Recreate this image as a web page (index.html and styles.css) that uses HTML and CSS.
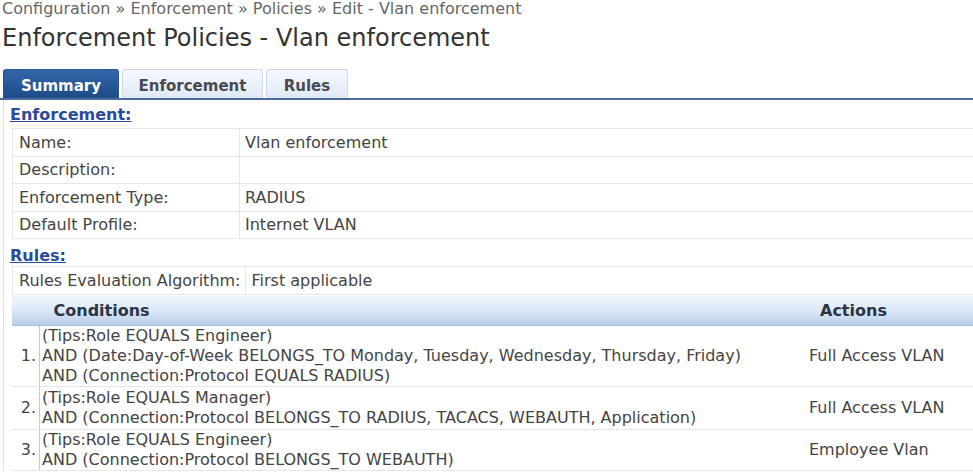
FILE: index.html
```html
<!DOCTYPE html>
<html>
<head>
<meta charset="utf-8">
<link rel="stylesheet" href="styles.css">
</head>
<body>
<div class="crumb">Configuration » Enforcement » Policies » Edit - Vlan enforcement</div>
<h1 class="title">Enforcement Policies - Vlan enforcement</h1>
<div class="tabs">
  <div class="tab active">Summary</div>
  <div class="tab tab-enf">Enforcement</div>
  <div class="tab tab-rules">Rules</div>
</div>
<div class="panel">
  <a class="section" href="#">Enforcement:</a>
  <table class="kv">
    <tr><td class="k">Name:</td><td class="v">Vlan enforcement</td></tr>
    <tr><td class="k">Description:</td><td class="v"></td></tr>
    <tr><td class="k">Enforcement Type:</td><td class="v">RADIUS</td></tr>
    <tr><td class="k">Default Profile:</td><td class="v">Internet VLAN</td></tr>
  </table>
  <a class="section rules-link" href="#">Rules:</a>
  <table class="kv algo">
    <tr><td class="k">Rules Evaluation Algorithm:</td><td class="v">First applicable</td></tr>
  </table>
  <table class="rules">
    <tr class="head"><th class="num"></th><th class="cond">Conditions</th><th class="act">Actions</th></tr>
    <tr class="r1"><td class="num">1.</td><td class="cond">(Tips:Role EQUALS Engineer)<br>AND (Date:Day-of-Week BELONGS_TO Monday, Tuesday, Wednesday, Thursday, Friday)<br>AND (Connection:Protocol EQUALS RADIUS)</td><td class="act">Full Access VLAN</td></tr>
    <tr class="r2"><td class="num">2.</td><td class="cond">(Tips:Role EQUALS Manager)<br>AND (Connection:Protocol BELONGS_TO RADIUS, TACACS, WEBAUTH, Application)</td><td class="act">Full Access VLAN</td></tr>
    <tr class="r3"><td class="num">3.</td><td class="cond">(Tips:Role EQUALS Engineer)<br>AND (Connection:Protocol BELONGS_TO WEBAUTH)</td><td class="act">Employee Vlan</td></tr>
  </table>
</div>
</body>
</html>
```
FILE: styles.css
```css
html, body { margin: 0; padding: 0; background: #fff; }
body { font-family: "DejaVu Sans", Verdana, sans-serif; color: #444; overflow: hidden; }
.crumb { font-size: 16px; color: #666; padding: 0 0 0 2px; height: 20px; line-height: 17px; white-space: nowrap; }
.title { font-size: 24px; font-weight: normal; color: #333; margin: 0; padding: 5px 0 0 2px; line-height: 26px; height: 42px; box-sizing: border-box; white-space: nowrap; }
.tabs { display: flex; gap: 3px; padding: 7px 0 0 3px; border-bottom: 2px solid #4d6a9c; height: 29px; }
.tab { font-size: 15px; font-weight: bold; color: #4a4a50; background: linear-gradient(#f4f8fd, #dfe9f6); border: 1px solid #d0d9e6; border-bottom: none; border-radius: 3px 3px 0 0; display: flex; align-items: center; justify-content: center; height: 29px; padding-top: 3px; box-sizing: border-box; }
.tab.active { width: 116px; color: #fff; background: linear-gradient(#3466a8, #1d4b8a); border-color: #2a5595; }
.tab-enf { width: 141px; }
.tab-rules { width: 82px; }
.panel { border-left: 1px solid #dde0e6; margin-left: 3px; padding: 6px 0 0 6px; }
.section { display: block; font-size: 16px; font-weight: bold; color: #2a4a9a; text-decoration: underline; line-height: 18px; height: 22px; }
.kv { border-collapse: collapse; width: calc(100% + 20px); margin-left: 2px; font-size: 16px; }
.kv td { border: 1px solid #e6e6ec; height: 26.5px; padding: 0 6px; color: #444; white-space: nowrap; }
.kv td.k { width: 214px; }
.kv td.v { padding-left: 5px; }
.rules-link { margin-top: 8px; height: 19px; }
.algo td.k { width: auto; padding-right: 4px; height: 26px; }
.algo td.v { padding-left: 6px; width: 100%; }
.rules { border-collapse: collapse; width: calc(100% + 20px); margin-left: 2px; margin-top: 1px; font-size: 16px; }
.rules .head th { height: 29px; background: linear-gradient(#f0f5fc, #dce8f8 50%, #b9cde7); border-bottom: 1px solid #aabbd6; color: #2c3444; font-weight: bold; text-align: left; padding: 0; }
.rules .head th.cond { padding-left: 14px; }
.rules .head th.act { padding-left: 11px; }
.rules td { border-bottom: 1px solid #e6e6ec; padding: 0; vertical-align: middle; line-height: 20px; color: #444; white-space: nowrap; }
.rules td.num { width: 24px; text-align: right; padding-right: 3px; border-right: 1px solid #c9c9cf; }
.rules td.cond { padding-left: 2px; width: 767px; }
.rules td.act { padding-left: 0; }
.rules tr.r1 td { height: 57px; }
.rules tr.r2 td { height: 42px; }
.rules tr.r3 td { height: 39px; }
```
